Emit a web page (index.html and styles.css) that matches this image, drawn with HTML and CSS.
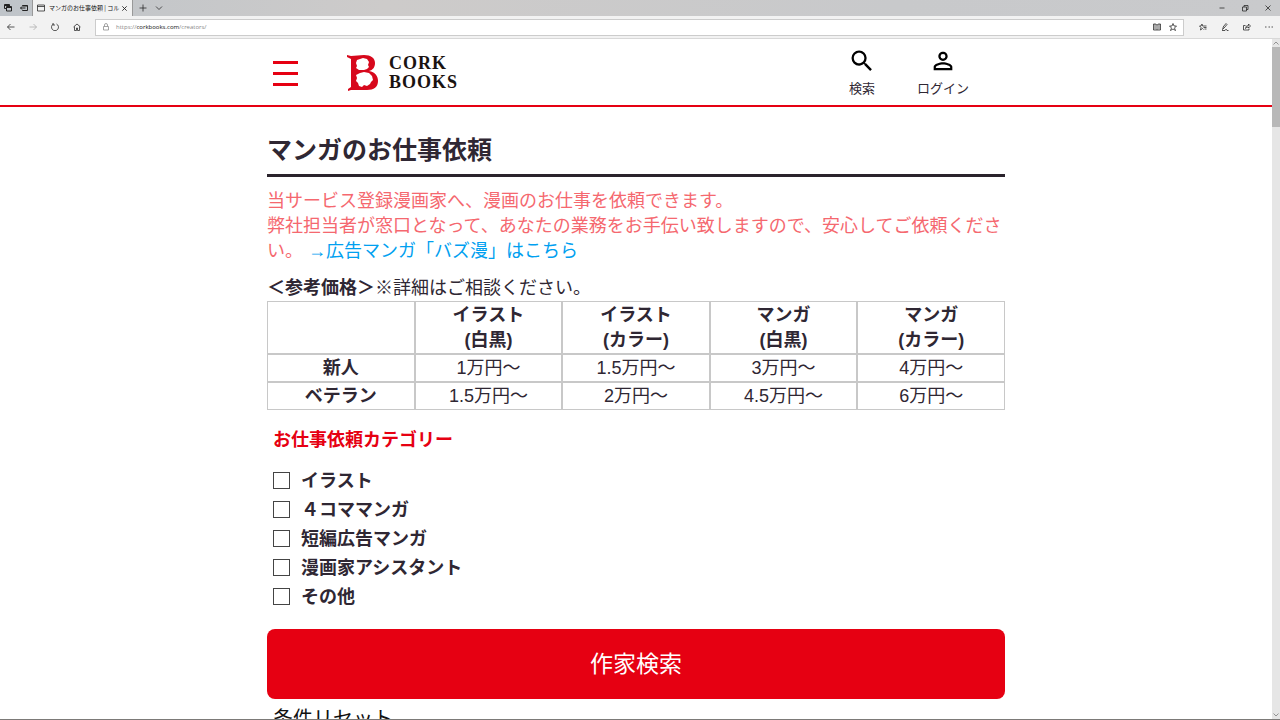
FILE: index.html
```html
<!DOCTYPE html>
<html lang="ja">
<head>
<meta charset="utf-8">
<title>マンガのお仕事依頼 | コルクBooks</title>
<link rel="stylesheet" href="styles.css">
</head>
<body>
<div class="tabstrip">
  <button class="strip-button" aria-label="タブ一覧"><svg class="icon" viewBox="0 0 16 16"><path d="M1 1h10v3M1 1v8h3M5 5h10v9H5zM5 7h10M2 3h8"/></svg></button>
  <button class="strip-button strip-button-last" aria-label="タブを保存"><svg class="icon" viewBox="0 0 16 16"><path d="M5 4V3h10v10H5v-1M5 4h10M11 8H1M4 5L1 8l3 3"/></svg></button>
  <div class="tab">
    <svg class="icon tab-page" viewBox="0 0 16 16"><path d="M1 2h14v12H1zM1 5h14"/></svg>
    <span class="tab-title">マンガのお仕事依頼 | コル</span>
    <button class="tab-close" aria-label="タブを閉じる"><svg class="icon" viewBox="0 0 16 16"><path d="M3 3l10 10M13 3L3 13"/></svg></button>
  </div>
  <button class="strip-action" aria-label="新しいタブ"><svg class="icon" viewBox="0 0 16 16"><path d="M8 1v14M1 8h14"/></svg></button>
  <button class="strip-action" aria-label="タブメニュー"><svg class="icon" viewBox="0 0 16 16"><path d="M2 5l6 6 6-6"/></svg></button>
  <div class="window-controls">
    <button aria-label="最小化"><svg class="icon" viewBox="0 0 16 16"><path d="M3 8h10"/></svg></button>
    <button aria-label="元に戻す"><svg class="icon" viewBox="0 0 16 16"><path d="M3 6h8v8H3zM6 6V3h8v8h-3"/></svg></button>
    <button aria-label="閉じる"><svg class="icon" viewBox="0 0 16 16"><path d="M3 3l10 10M13 3L3 13"/></svg></button>
  </div>
</div>
<div class="toolbar">
  <div class="nav-buttons">
    <button aria-label="戻る"><svg class="icon" viewBox="0 0 16 16"><path d="M15 8H1M7 2L1 8l6 6"/></svg></button>
    <button class="is-disabled" aria-label="進む"><svg class="icon" viewBox="0 0 16 16"><path d="M1 8h14M9 2l6 6-6 6"/></svg></button>
    <button aria-label="更新"><svg class="icon" viewBox="0 0 16 16"><path d="M5 2a7 7 0 1 0 6 0M2 2h4v4"/></svg></button>
    <button aria-label="ホーム"><svg class="icon" viewBox="0 0 16 16"><path d="M1 8l7-6 7 6M3 7v8h4v-5h2v5h4V7"/></svg></button>
  </div>
  <div class="address">
    <svg class="icon lock" viewBox="0 0 16 16"><path d="M3 7h10v7H3zM5 7V4a3 3 0 0 1 6 0v3"/></svg>
    <span class="url">https://<span class="url-host">corkbooks.com</span>/creators/</span>
    <button aria-label="読み取りビュー"><svg class="icon" viewBox="0 0 16 16"><path d="M8 4v10M8 4Q5 1 1 2v12h14V2q-4-1-7 2M4 2v11M12 2v11"/></svg></button>
    <button aria-label="お気に入りに追加"><svg class="icon" viewBox="0 0 16 16"><path d="M8 1l2 5h5l-4 4 2 5-5-3-5 3 2-5-4-4h5z"/></svg></button>
  </div>
  <div class="tool-buttons">
    <button aria-label="お気に入り"><svg class="icon" viewBox="0 0 16 16"><path d="M10 6L7 6 6 2 4 6H1l3 3-1 5 4-3 2 2M10 6h5M9 9h6M11 12h4"/></svg></button>
    <button aria-label="ノートの追加"><svg class="icon" viewBox="0 0 16 16"><path d="M3 13l2-6 5-6 2 2-5 6-4 4zM5 7l2 2M2 15h6q1-3 3-2 0 3 4 2"/></svg></button>
    <button aria-label="共有"><svg class="icon" viewBox="0 0 16 16"><path d="M5 5H1v9h11v-3M5 11q0-6 6-6V2l4 4-4 4V8q-4 0-6 3z"/></svg></button>
    <button aria-label="設定など"><svg class="icon" viewBox="0 0 16 16"><path d="M0 8h3M7 8h3M13 8h3"/></svg></button>
  </div>
</div>
<div class="viewport">
  <div class="page">
    <header class="site-header">
      <div class="header-inner">
        <button class="menu" aria-label="メニュー"><span></span><span></span><span></span></button>
        <a class="logo" href="#">
          <svg class="logo-mark" viewBox="0 0 32 36"><path fill="#d7081c" fill-rule="evenodd" d="M0 0L4 1L17 0C24 0 28 3 28 8C28 12 26 15 22 16C28 17 31 21 31 26C31 32 27 35 20 35L4 35L1 36V34L4 32V4L0 2ZM13 4L10 5L9 8L10 11L9 13L12 15L17 15L20 14L22 12L21 10L22 7L20 4L16 3ZM13 18L9 20L10 23L9 26L11 28L12 31L15 32L17 30L20 31L23 29L24 27L26 25L25 21L22 18L17 17Z"/></svg>
          <span class="logo-text">CORK<br>BOOKS</span>
        </a>
        <nav class="header-nav">
          <a class="header-link" href="#"><svg viewBox="0 0 24 24"><path d="M15.5 14h-.79l-.28-.27A6.47 6.47 0 0 0 16 9.5 6.5 6.5 0 1 0 9.5 16c1.61 0 3.09-.59 4.23-1.57l.27.28v.79l5 4.99L20.49 19l-4.99-5zm-6 0C7.01 14 5 11.99 5 9.5S7.01 5 9.5 5 14 7.01 14 9.5 11.99 14 9.5 14z"/></svg>検索</a>
          <a class="header-link" href="#"><svg viewBox="0 0 24 24"><path d="M12 5.9a2.1 2.1 0 1 1 0 4.2 2.1 2.1 0 0 1 0-4.2m0 9c2.97 0 6.1 1.46 6.1 2.1v1.1H5.9V17c0-.64 3.13-2.1 6.1-2.1M12 4C9.79 4 8 5.79 8 8s1.79 4 4 4 4-1.79 4-4-1.79-4-4-4zm0 9c-2.67 0-8 1.34-8 4v3h16v-3c0-2.66-5.33-4-8-4z"/></svg>ログイン</a>
        </nav>
      </div>
    </header>
    <main class="content">
      <h1 class="title">マンガのお仕事依頼</h1>
      <p class="lead">当サービス登録漫画家へ、漫画のお仕事を依頼できます。<br>弊社担当者が窓口となって、あなたの業務をお手伝い致しますので、安心してご依頼ください。 <a href="#">→広告マンガ「バズ漫」はこちら</a></p>
      <p class="price-note"><strong>＜参考価格＞</strong>※詳細はご相談ください。</p>
      <table class="prices">
        <tr><th></th><th>イラスト<br>(白黒)</th><th>イラスト<br>(カラー)</th><th>マンガ<br>(白黒)</th><th>マンガ<br>(カラー)</th></tr>
        <tr><th>新人</th><td>1万円～</td><td>1.5万円～</td><td>3万円～</td><td>4万円～</td></tr>
        <tr><th>ベテラン</th><td>1.5万円～</td><td>2万円～</td><td>4.5万円～</td><td>6万円～</td></tr>
      </table>
      <form class="search">
        <fieldset class="categories">
          <legend>お仕事依頼カテゴリー</legend>
          <label><input type="checkbox">イラスト</label>
          <label><input type="checkbox">４コママンガ</label>
          <label><input type="checkbox">短編広告マンガ</label>
          <label><input type="checkbox">漫画家アシスタント</label>
          <label><input type="checkbox">その他</label>
        </fieldset>
        <button class="submit" type="button">作家検索</button>
        <button class="reset" type="reset">条件リセット</button>
      </form>
    </main>
  </div>
  <div class="scrollbar">
    <svg class="icon" viewBox="0 0 16 16"><path d="M3 11l5-5 5 5"/></svg>
    <div class="thumb"></div>
    <svg class="icon scroll-down" viewBox="0 0 16 16"><path d="M3 5l5 5 5-5"/></svg>
  </div>
</div>
</body>
</html>
```
FILE: styles.css
```css
* { box-sizing: border-box; }

body {
  margin: 0;
  height: 100vh;
  display: flex;
  flex-direction: column;
  overflow: hidden;
  background: #fff;
  border-bottom: 1px solid #7c7a78;
  color: #2f2733;
  font-family: "Liberation Sans", "Noto Sans CJK JP", sans-serif;
  font-size: 18px;
  line-height: 25px;
}

button {
  margin: 0;
  padding: 0;
  border: 0;
  background: none;
  color: inherit;
  font: inherit;
  cursor: pointer;
}

a { color: inherit; text-decoration: none; }

.icon {
  display: block;
  width: 8px;
  height: 8px;
  fill: none;
  stroke: #222;
  stroke-width: 2;
}

/* Browser window */
.tabstrip {
  flex: none;
  display: flex;
  align-items: center;
  height: 16px;
  background: linear-gradient(90deg, #bfc4c9, #cdcbca 30%, #c8c9cb 70%, #c9cacc);
}
.strip-button { padding-left: 4px; }
.strip-button-last { padding: 0 4px 0 8px; }
.tab {
  display: flex;
  align-items: center;
  align-self: stretch;
  width: 101px;
  padding: 0 4px;
  background: #f2f2f2;
  border-left: 1px solid #999;
  border-right: 1px solid #999;
}
.tab-page { margin-right: 4px; }
.tab-title {
  flex: 1;
  overflow: hidden;
  white-space: nowrap;
  color: #111;
  font-family: "Noto Sans CJK JP", sans-serif;
  font-size: 6px;
  line-height: 12px;
}
.tab-page, .strip-action .icon, .window-controls .icon, .toolbar .icon { stroke-width: 1.5; }
.tab-close .icon { width: 7px; height: 7px; }
.strip-action { margin-left: 4px; padding: 0 2px; }
.window-controls { display: flex; gap: 15px; margin-left: auto; padding-right: 8px; }

.toolbar {
  flex: none;
  display: flex;
  align-items: center;
  height: 23px;
  background: #f2f2f2;
  border-bottom: 1px solid #d8d8d8;
}
.nav-buttons { display: flex; gap: 14px; padding: 0 14px 0 7px; }
.toolbar .is-disabled .icon { stroke: #aaa; }
.address {
  flex: 1;
  display: flex;
  align-items: center;
  gap: 8px;
  height: 17px;
  padding: 0 6px;
  background: #fff;
  border: 1px solid #ccc;
}
.lock { margin-right: -2px; stroke: #888; }
.url {
  flex: 1;
  color: #888;
  font-family: "Open Sans", sans-serif;
  font-size: 6px;
  line-height: 12px;
}
.url-host { color: #111; }
.tool-buttons { display: flex; gap: 14px; padding: 0 7px 0 15px; }

.viewport { flex: 1; display: flex; min-height: 0; }
.page { flex: 1; overflow: hidden; }
.scrollbar {
  display: flex;
  flex-direction: column;
  width: 8px;
  background: #e6e6e6;
}
.scrollbar .icon { stroke: #777; stroke-width: 1.5; }
.thumb { height: 80px; background: #b8b8b8; }
.scroll-down { margin-top: auto; }

/* Site header */
.site-header { border-bottom: 2px solid #e60012; }
.header-inner {
  display: flex;
  align-items: center;
  max-width: 738px;
  margin: 0 auto;
  padding: 8px 36px 7px 6px;
}
.menu {
  display: flex;
  flex-direction: column;
  gap: 8px;
  width: 25px;
  margin: 2px 49px 0 0;
}
.menu span { height: 3px; background: #e60012; }
.logo { display: flex; align-items: center; gap: 10px; margin-top: 1px; }
.logo-mark { width: 32px; height: 36px; }
.logo-text {
  color: #1a1311;
  font-family: "Liberation Serif", serif;
  font-size: 18px;
  font-weight: bold;
  line-height: 19px;
  letter-spacing: 1px;
}
.header-nav { display: flex; gap: 41px; margin-left: auto; }
.header-link {
  display: flex;
  flex-direction: column;
  align-items: center;
  gap: 5px;
  font-size: 13px;
  line-height: 18px;
}
.header-link svg { width: 28px; height: 28px; fill: #000; }

/* Content */
.content { max-width: 738px; margin: 0 auto; }
.title {
  margin: 0 0 12px;
  padding: 25px 0 6px;
  border-bottom: 3px solid #2a232c;
  font-size: 25px;
  line-height: 36px;
}
.lead { margin: 0 0 12px; color: #f5686f; }
.lead a { color: #00a0f0; }
.price-note { margin: 0; }
.prices {
  width: 100%;
  table-layout: fixed;
  border-collapse: separate;
  border-spacing: 0;
  text-align: center;
}
.prices th, .prices td { padding: 1px 0 0; border: 1px solid #c8c8c8; }

.categories {
  display: flex;
  flex-direction: column;
  min-width: 0;
  margin: 0;
  padding: 0 6px;
  border: 0;
  font-weight: bold;
}
.categories legend { padding: 18px 0 14px; color: #e60012; }
.categories label { display: flex; align-items: center; line-height: 29px; }
.categories input {
  appearance: none;
  width: 17px;
  height: 17px;
  margin: 0 11px 2px 0;
  border: 1px solid #444;
  background: #fff;
}
.submit {
  display: block;
  width: 100%;
  margin: 17px 0 6px;
  padding: 20px 0;
  border-radius: 8px;
  background: #e60012;
  color: #fff;
  font-size: 23px;
  line-height: 30px;
}
.reset { margin-left: 6px; color: #111; font-size: 20px; line-height: 28px; }
```
